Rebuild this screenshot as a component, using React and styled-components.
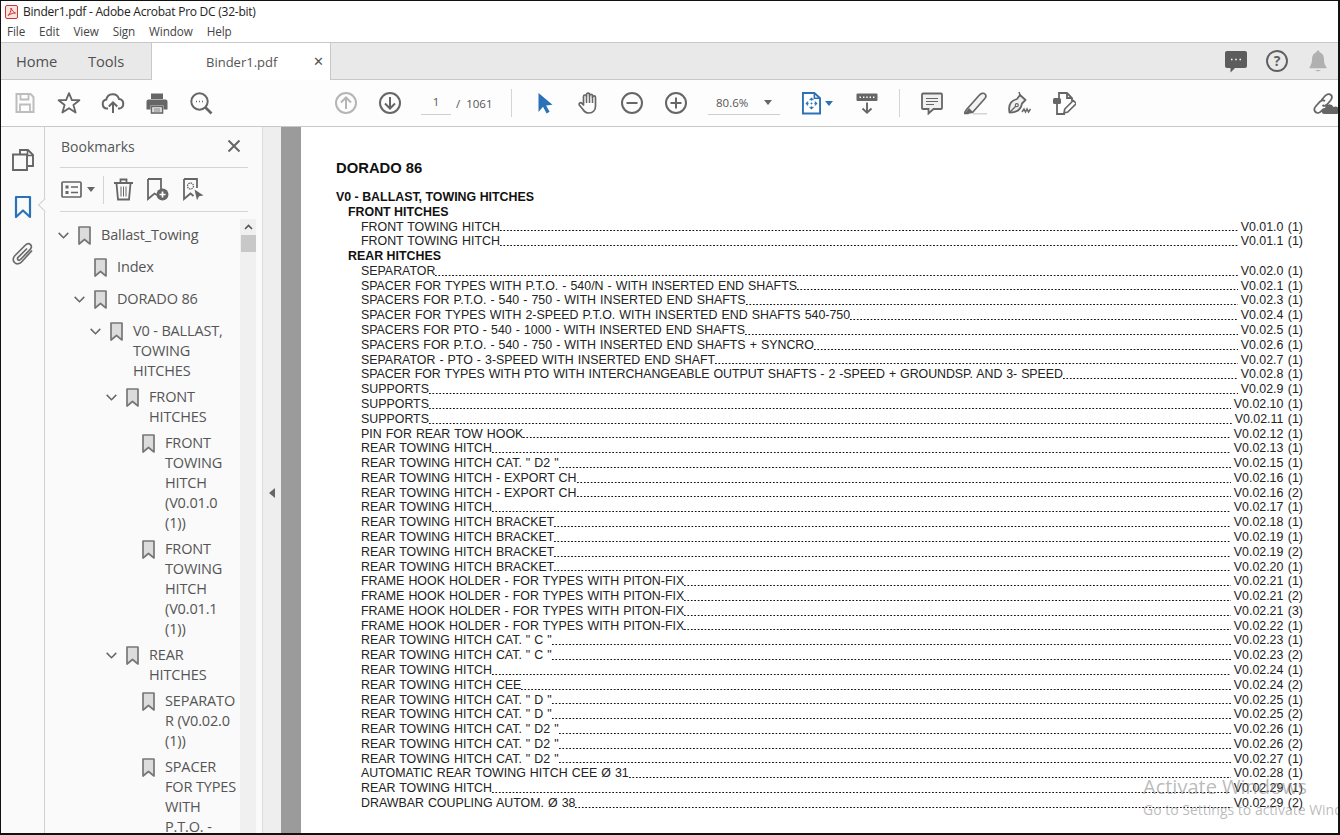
import React from "react";
import styled, { createGlobalStyle } from "styled-components";

const Global = createGlobalStyle`
  html, body { margin: 0; padding: 0; background: #fff; overflow: hidden; }
  * { box-sizing: border-box; }
`;
const UI = `"Open Sans", "Noto Sans", sans-serif`;

const Frame = styled.div`
  width: 1340px; height: 835px; display: flex; flex-direction: column; position: relative; overflow: hidden;
  border: solid #111; border-width: 1px 2px 2px 1px; font-family: ${UI}; background: #fff;
`;
const TitleBar = styled.div`
  height: 19px; display: flex; align-items: center; padding: 2px 0 0 4px; gap: 5px; font-size: 12px; color: #222; letter-spacing: -0.25px;
`;
const MenuBar = styled.div`
  height: 23px; display: flex; align-items: center; padding-left: 6px; gap: 14px; font-size: 11.7px; color: #444; letter-spacing: -0.1px; border-bottom: 1px solid #c8c8c8;
`;
const TabBar = styled.div`
  height: 37px; display: flex; align-items: stretch; background: #e9e9e9; border-bottom: 1px solid #c8c8c8; color: #505050;
`;
const NavTab = styled.div`
  display: flex; align-items: center; font-size: 14.7px; margin-left: ${p => p.$ml}px; width: ${p => p.$w}px; letter-spacing: -0.05px;
`;
const DocTab = styled.div`
  width: 180px; margin-bottom: -1px; background: #fff; border: solid #c8c8c8; border-width: 0 1px; display: flex; align-items: center; font-size: 13px; padding-left: 54px; color: #555; position: relative;
`;
const TabClose = styled.span`
  position: absolute; left: 161px; top: 10px; font-size: 13px; line-height: 16px; color: #555;
`;
const TabIcons = styled.div`
  margin-left: auto; display: flex; align-items: center; gap: 14px; padding-right: 7px;
`;
const TabIcon = styled.div`
  width: 27px; height: 27px; display: flex; align-items: center; justify-content: center;
`;
const Toolbar = styled.div`
  height: 47px; flex: none; display: flex; align-items: center; padding-left: 2px; border-bottom: 1px solid #c8c8c8; background: #fdfdfd; overflow: hidden;
`;
const ToolBtn = styled.div`
  width: 44px; height: 30px; flex: none; display: flex; align-items: center; justify-content: center; gap: 2px;
`;
const FitBtn = styled(ToolBtn)` justify-content: flex-start; padding-left: 13px; gap: 4px; `;
const Gap = styled.div` flex: none; width: ${p => p.$w}px; `;
const Divider = styled.div` flex: none; width: 1px; height: 28px; background: #d4d4d4; `;
const PageField = styled.div`
  width: 30px; flex: none; height: 24px; border-bottom: 1px solid #cfcfcf; font-size: 11.5px; color: #555; text-align: center; line-height: 22px;
`;
const PageTotal = styled.div` flex: none; font-size: 11.5px; color: #555; margin-left: 5px; width: 55px; white-space: pre; `;
const ZoomField = styled.div`
  width: 72px; flex: none; height: 24px; border-bottom: 1px solid #cfcfcf; font-size: 11.5px; color: #555; line-height: 22px; display: flex; justify-content: space-between; padding: 0 8px; align-items: center;
`;
const Caret = styled.span`
  display: inline-block; flex: none; width: 0; height: 0; border: 4px solid transparent; border-top: 5px solid ${p => p.$c || "#666"}; border-bottom: 0;
`;
const Main = styled.div` flex: 1; display: flex; min-height: 0; `;
const Rail = styled.div`
  width: 44px; flex: none; background: #fafafa; border-right: 1px solid #d0d0d0; display: flex; flex-direction: column; align-items: center; padding-top: 19px; gap: 19px; position: relative;
`;
const RailIcon = styled.div` width: 28px; height: 28px; display: flex; align-items: center; justify-content: center; `;
const RailNotch = styled.div`
  position: absolute; left: 39px; top: 73px; width: 10px; height: 10px; background: #fafafa; border: solid #d0d0d0; border-width: 0 0 1px 1px; transform: rotate(45deg);
`;
const Panel = styled.div`
  width: 217px; flex: none; background: #fafafa; display: flex; flex-direction: column; min-height: 0; padding-left: 15px;
`;
const PanelHead = styled.div`
  height: 41px; width: 188px; flex: none; display: flex; align-items: center; justify-content: space-between; font-size: 14px; color: #555; padding: 0 7px 2px 1px; border-bottom: 1px solid #d4d4d4;
`;
const PanelTools = styled.div`
  height: 44px; width: 188px; flex: none; display: flex; align-items: center; border-bottom: 1px solid #d4d4d4; padding-left: 1px;
`;
const PanelList = styled.div` flex: none; width: 42px; display: flex; align-items: center; gap: 5px; `;
const PanelBtn = styled.div` flex: none; width: ${p => p.$w}px; display: flex; align-items: center; justify-content: center; `;
const TreeWrap = styled.div` flex: 1; min-height: 0; display: flex; margin-left: -15px; padding-top: 7px; overflow: hidden; `;
const Tree = styled.div` width: 195px; flex: none; `;
const Item = styled.div`
  position: relative; padding: 6px 2px ${p => (p.$multi ? 0 : 6)}px ${p => 56 + p.$level * 16}px; font-size: 14.5px; line-height: 20px; color: #555; overflow-wrap: anywhere; letter-spacing: -0.15px;
`;
const ItemMarks = styled.div`
  position: absolute; left: ${p => 13 + p.$level * 16}px; top: 6px; height: 20px; display: flex; align-items: center;
`;
const Chev = styled.div` width: 20px; flex: none; display: flex; justify-content: flex-start; `;
const Scrollbar = styled.div`
  width: 16px; flex: none; background: #f0f0f0; display: flex; flex-direction: column; align-items: center;
`;
const ScrollUp = styled.div` height: 16px; display: flex; align-items: center; `;
const ScrollThumb = styled.div` width: 15px; height: 17px; background: #c8c8c8; `;
const Collapse = styled.div`
  width: 19px; flex: none; background: #eeeeee; border-left: 1px solid #dcdcdc; display: flex; align-items: center; justify-content: center; padding-top: 26px;
`;
const CollapseArrow = styled.span`
  display: block; width: 0; height: 0; border: 5px solid transparent; border-right: 6px solid #666; border-left: 0;
`;
const Gutter = styled.div` width: 20px; flex: none; background: #9b9b9b; `;
const PageView = styled.div`
  flex: 1; min-width: 0; padding: 32px 35px 0 35px; font-family: "Liberation Sans", Arial, sans-serif; color: #1c1c1c; overflow: hidden; background: #fff;
`;
const DocTitle = styled.div` font-size: 14.8px; font-weight: 700; line-height: 18px; margin-bottom: 13px; color: #111; `;
const Head = styled.div`
  font-size: 12.4px; font-weight: 700; line-height: 14.78px; padding-left: ${p => p.$indent}px; color: #111; white-space: nowrap;
`;
const Row = styled.div`
  display: flex; font-size: 12.4px; line-height: 14.78px; padding-left: 25px; white-space: nowrap; color: #222;
`;
const RowName = styled.span` flex: none; word-spacing: 0.6px; letter-spacing: ${p => p.$ls || 0}px; `;
const Leader = styled.span`
  flex: 1; min-width: 0;
  background: linear-gradient(to right, #111 1.4px, transparent 1.4px) left bottom 3px / 3.44px 1px repeat-x;
`;
const RowCode = styled.span` flex: none; margin-left: 3px; word-spacing: 1px; `;
const Watermark = styled.div`
  position: absolute; left: 1142px; top: 773px; color: rgba(120,120,120,0.5); white-space: nowrap; pointer-events: none; font-family: ${UI};
`;
const WmTitle = styled.div` font-size: 20px; line-height: 26px; `;
const WmSub = styled.div` font-size: 14px; line-height: 20px; `;

const Svg = ({ w = 24, h = 24, vb, children }) => (
  <svg width={w} height={h} viewBox={vb || `0 0 ${w} ${h}`} fill="none">{children}</svg>
);

const PdfLogo = () => (
  <Svg w={13} h={14}>
    <rect x=".5" y=".5" width="12" height="13" rx="1.5" fill="#f8e3e0" stroke="#c8382e" />
    <path d="M3 10.5C5 9 6.5 5.5 6 3c1 2.5 2.5 4.5 4.5 5-2.5 0-5 .8-7.5 2.5Z" stroke="#c8382e" strokeWidth="1" />
  </Svg>
);
const SaveIcon = () => (
  <Svg>
    <path d="M3.5 3h14l3 3v15h-17z" stroke="#bdbdbd" strokeWidth="2" />
    <path d="M7.5 3.5v5h8v-5M7 20.5v-7h10v7" stroke="#bdbdbd" strokeWidth="1.8" />
  </Svg>
);
const StarIcon = () => (
  <Svg><path d="M12 2.2l2.9 7h7.5l-6 4.8 2.2 7.6L12 17.2l-6.6 4.4 2.2-7.6-6-4.8h7.5z" stroke="#666" strokeWidth="1.8" strokeLinejoin="round" /></Svg>
);
const UploadIcon = () => (
  <Svg>
    <path d="M7 17.5H6a4.5 4.5 0 0 1-.7-8.9A6.5 6.5 0 0 1 18 8a4.8 4.8 0 0 1 .3 9.5H17" stroke="#666" strokeWidth="2" />
    <path d="M12 22V11.5M7.8 15.5 12 11.3l4.2 4.2" stroke="#666" strokeWidth="2" />
  </Svg>
);
const PrintIcon = () => (
  <Svg>
    <path d="M6 2.5h12V8H6z" fill="#666" />
    <path d="M3.5 8.5h17a2 2 0 0 1 2 2v8h-4v-4h-13v4h-4v-8a2 2 0 0 1 2-2Z" fill="#666" />
    <rect x="6.5" y="15.5" width="11" height="6.5" fill="#fff" stroke="#666" strokeWidth="1.6" />
    <path d="M8.5 18h7M8.5 20h7" stroke="#666" />
  </Svg>
);
const SearchIcon = () => (
  <Svg>
    <circle cx="10.5" cy="10.5" r="8.2" stroke="#666" strokeWidth="2" />
    <path d="m16.5 16.5 6 6" stroke="#666" strokeWidth="2.6" />
    <path d="M7 10.5h1M10 10.5h1M13 10.5h1" stroke="#666" strokeWidth="1.6" />
  </Svg>
);
const CircleArrow = ({ up, c }) => (
  <Svg>
    <circle cx="12" cy="12" r="10" stroke={c} strokeWidth="2" />
    <path d={up ? "M12 18V6.5M7 11.5l5-5 5 5" : "M12 6v11.5M7 12.5l5 5 5-5"} stroke={c} strokeWidth="2" />
  </Svg>
);
const SelectIcon = () => (
  <Svg><path d="M6.5 2v19l4.5-5.2 3.6 6.6 3-1.6-3.5-6.4 6.4-.6z" fill="#2a72b8" /></Svg>
);
const HandIcon = () => (
  <Svg>
    <path d="M7.5 14V5.5a1.5 1.5 0 0 1 3 0V3.6a1.5 1.5 0 0 1 3 0v1.2a1.5 1.5 0 0 1 3 0v1.5a1.5 1.5 0 0 1 3 0V15c0 4-2.5 7-6.5 7-3 0-4.5-1-6-3.5L3.3 14c-1-1.7 1.4-3.2 2.6-1.6z" stroke="#666" strokeWidth="1.7" strokeLinejoin="round" />
    <path d="M10.5 5.5V12M13.5 4.5V12M16.5 5.5V12" stroke="#666" strokeWidth="1.5" />
  </Svg>
);
const CircleSign = ({ plus }) => (
  <Svg>
    <circle cx="12" cy="12" r="10" stroke="#666" strokeWidth="2" />
    <path d={plus ? "M6.5 12h11M12 6.5v11" : "M6.5 12h11"} stroke="#666" strokeWidth="2" />
  </Svg>
);
const FitIcon = () => (
  <Svg w={20} h={24}>
    <path d="M1 1.5h12l6 5.5v16H1z" fill="#fff" stroke="#2a72b8" strokeWidth="2" />
    <path d="M13 1.5V7h6" stroke="#2a72b8" strokeWidth="1.6" />
    <path d="M10 7.5v10M5 12.5h10" stroke="#2a72b8" strokeDasharray="2 2" />
    <path d="m8 9 2-2 2 2M8 16l2 2 2-2M6.5 10.5l-2 2 2 2M13.5 10.5l2 2-2 2" stroke="#2a72b8" strokeWidth="1.2" />
  </Svg>
);
const KbdIcon = () => (
  <Svg>
    <rect x="1.5" y="2.5" width="21" height="7.5" rx="1" fill="#666" />
    <path d="M4.5 6.2h1.4M8 6.2h1.4M11.3 6.2h1.4M14.6 6.2H16M18 6.2h1.4" stroke="#fff" strokeWidth="1.6" />
    <path d="M12 11.5v10M7.5 17.5l4.5 4.2 4.5-4.2" stroke="#666" strokeWidth="1.9" />
  </Svg>
);
const CommentIcon = () => (
  <Svg>
    <path d="M3 2.5h18a1 1 0 0 1 1 1V17a1 1 0 0 1-1 1h-7.5L8.5 22.5V18H3a1 1 0 0 1-1-1V3.5a1 1 0 0 1 1-1Z" fill="#f0f0f0" stroke="#666" strokeWidth="1.8" />
    <path d="M6 7.5h12M6 10.5h12M6 13.5h8" stroke="#666" strokeWidth="1.2" />
  </Svg>
);
const MarkerIcon = () => (
  <Svg>
    <path d="M0 22.5 3 18l12-13.5c2-2 4.5-3 6-1.5s1 3.5-1 5.5L8.5 21.5 5 21l-1 1.5z" fill="#f2f2f2" stroke="#666" strokeWidth="1.7" strokeLinejoin="round" />
    <path d="M1 22.5 5 17l4 4-2 1.5z" fill="#666" />
    <path d="M9 22h14v1.5H9z" fill="#d5d5d5" />
  </Svg>
);
const SignIcon = () => (
  <Svg>
    <path d="M1.5 21.5C0 14 3 9.5 9 8l3-4 5.5 5-3.5 3.5C13 18.5 9 21.5 1.5 21.5Z" fill="#f0f0f0" stroke="#666" strokeWidth="1.8" strokeLinejoin="round" />
    <path d="M1.5 21.5 8 15" stroke="#666" strokeWidth="1.4" />
    <circle cx="8.8" cy="14.2" r="1.5" stroke="#666" strokeWidth="1.2" />
    <path d="M12.5 5.5 11 1M14 21l2-3 1.5 3 1.5-3 1.5 3 2-3" stroke="#666" strokeWidth="1.5" />
  </Svg>
);
const EditDocIcon = () => (
  <Svg>
    <path d="M7 7V2h8l5 5v3.5M15 2v5h5M5 13v10h8" stroke="#666" strokeWidth="1.8" />
    <rect x="1" y="7" width="8" height="6" rx="1.5" fill="#666" />
    <path d="m12 22 .8-4 8.5-8.5 3 3-8.5 8.5z" fill="#fff" stroke="#666" strokeWidth="1.7" strokeLinejoin="round" />
  </Svg>
);
const LinkCloudIcon = () => (
  <Svg w={28} h={24}>
    <path d="M10.5 9 14 5c2-2.2 4.5-2.5 6-1s1 3.5-.5 5.5L16 13.5c-1.5 1.5-3.5 1.5-4.5.5" stroke="#666" strokeWidth="1.8" />
    <path d="M14 10c-1.5-1-3.3-1-4.8.5L5 15c-2 2.2-2 4.5-.5 6s4 1 5.8-.8L12 18.5" stroke="#666" strokeWidth="1.8" />
    <path d="M13.5 23a3 3 0 0 1 .5-6 4.5 4.5 0 0 1 8.5-1 3.5 3.5 0 0 1 3.5 7z" fill="#666" />
  </Svg>
);
const ChatIcon = () => (
  <Svg>
    <path d="M3 2h18a2 2 0 0 1 2 2v13a2 2 0 0 1-2 2h-10l-4.5 4.5V19H3a2 2 0 0 1-2-2V4a2 2 0 0 1 2-2Z" fill="#5c5c5c" />
    <path d="M7 10.5h1.5M11.2 10.5h1.5M15.5 10.5H17" stroke="#fff" strokeWidth="1.7" />
  </Svg>
);
const HelpIcon = () => (
  <Svg>
    <circle cx="12" cy="12" r="10" stroke="#5f5f5f" strokeWidth="1.9" fill="none" />
    <text x="12" y="17" textAnchor="middle" fontSize="14" fontWeight="700" fontFamily="'Open Sans', sans-serif" fill="#5f5f5f">?</text>
  </Svg>
);
const BellIcon = () => (
  <Svg>
    <path d="M12 1.5c1 0 1.5.7 1.5 1.7 3 .8 4.5 3.5 4.5 7 0 4 1 6 2.5 8v1h-17v-1C5 16 6 14 6 10.2c0-3.5 1.5-6.2 4.5-7C10.5 2.2 11 1.5 12 1.5Z" fill="#b0b0b0" />
    <path d="M9 21h6l-3 1.5z" fill="#b0b0b0" />
  </Svg>
);
const PagesIcon = () => (
  <Svg>
    <path d="M9 6V2h8l5 5v11h-5" stroke="#666" strokeWidth="1.9" />
    <path d="M16.5 2v5.5H22" stroke="#666" strokeWidth="1.6" />
    <path d="M2 6.5h14V22H2z" fill="#fafafa" stroke="#666" strokeWidth="1.9" />
  </Svg>
);
const BlueBookmark = () => (
  <Svg><path d="M5 2h14v20l-7-6.5L5 22z" stroke="#2a72b8" strokeWidth="2.2" strokeLinejoin="round" /></Svg>
);
const ClipIcon = () => (
  <Svg>
    <path d="M21 8.5 10.5 20c-2 2-5 2.5-7 .5s-1.5-5 .5-7L14.5 3c1.5-1.5 3.5-1.7 5-.3s1 3.5-.5 5L9.5 17.5c-.8.8-1.8 1-2.5.3s-.5-1.8.3-2.6L16 6.5" stroke="#6a6a6a" strokeWidth="1.7" />
  </Svg>
);
const ListIcon = () => (
  <Svg w={21} h={17}>
    <rect x="1" y="1" width="19" height="15" rx="1" stroke="#666" strokeWidth="1.7" />
    <path d="M4.5 4.5h3v3h-3zM4.5 10h3v3h-3z" fill="#666" />
    <path d="M10 6h7M10 11.5h7" stroke="#666" strokeWidth="1.7" />
  </Svg>
);
const TrashIcon = () => (
  <Svg w={21} h={23}>
    <path d="M1 5h19M7.5 4.5v-3h6v3" stroke="#666" strokeWidth="1.8" />
    <path d="M3.5 5.5 5 21.5h11l1.5-16" stroke="#666" strokeWidth="1.8" />
    <path d="M8 8.5v10M10.5 8.5v10M13 8.5v10" stroke="#666" />
  </Svg>
);
const BookmarkAdd = () => (
  <Svg w={23} h={23}>
    <path d="M2 1h13v10M2 1v20l6.5-5.5L11 17" stroke="#666" strokeWidth="1.8" />
    <circle cx="16.5" cy="16.5" r="6" fill="#666" />
    <path d="M13.5 16.5h6M16.5 13.5v6" stroke="#fff" strokeWidth="1.7" />
  </Svg>
);
const BookmarkStar = () => (
  <Svg w={23} h={23}>
    <path d="M2 1h13v9M2 1v20l6.5-5.5 3 2.5" stroke="#666" strokeWidth="1.8" />
    <circle cx="8.5" cy="8" r="3" stroke="#666" strokeWidth="1.3" strokeDasharray="1.5 .8" />
    <path d="m12.5 11.5 9 6-4.5.8-2 4z" fill="#666" />
  </Svg>
);
const TreeBookmark = () => (
  <Svg w={13} h={19}>
    <path d="M1 1h11v17l-5.5-4.500L1 18z" fill="#dcdcdc" stroke="#777" strokeWidth="1.7" strokeLinejoin="round" />
  </Svg>
);
const Chevron = () => (
  <Svg w={11} h={7}><path d="m.7.9 4.8 4.8L10.3.9" stroke="#666" strokeWidth="1.5" /></Svg>
);
const ChevronUp = () => (
  <Svg w={9} h={6}><path d="m1 5 3.5-3.5L8 5" stroke="#555" strokeWidth="1.6" /></Svg>
);

const tree = [
  [0, true, "Ballast_Towing"], [1, false, "Index"], [1, true, "DORADO 86"],
  [2, true, "V0 - BALLAST, TOWING HITCHES", true], [3, true, "FRONT HITCHES", true],
  [4, false, "FRONT TOWING HITCH (V0.01.0 (1))", true], [4, false, "FRONT TOWING HITCH (V0.01.1 (1))", true],
  [3, true, "REAR HITCHES", true], [4, false, "SEPARATOR\u00a0(V0.02.0 (1))", true],
  [4, false, "SPACER FOR TYPES WITH P.T.O. - 540/N", true],
];

const rh = "REAR TOWING HITCH", rb = "REAR TOWING HITCH BRACKET", fh = "FRAME HOOK HOLDER - FOR TYPES WITH PITON-FIX";
const rear = [
  ["SEPARATOR", "V0.02.0 (1)"],
  ["SPACER FOR TYPES WITH P.T.O. - 540/N - WITH INSERTED END SHAFTS", "V0.02.1 (1)"],
  ["SPACERS FOR P.T.O. - 540 - 750 - WITH INSERTED END SHAFTS", "V0.02.3 (1)"],
  ["SPACER FOR TYPES WITH 2-SPEED P.T.O. WITH INSERTED END SHAFTS 540-750", "V0.02.4 (1)"],
  ["SPACERS FOR PTO - 540 - 1000 - WITH INSERTED END SHAFTS", "V0.02.5 (1)"],
  ["SPACERS FOR P.T.O. - 540 - 750 - WITH INSERTED END SHAFTS + SYNCRO", "V0.02.6 (1)"],
  ["SEPARATOR - PTO - 3-SPEED WITH INSERTED END SHAFT", "V0.02.7 (1)"],
  ["SPACER FOR TYPES WITH PTO WITH INTERCHANGEABLE OUTPUT SHAFTS - 2 -SPEED + GROUNDSP. AND 3- SPEED", "V0.02.8 (1)", -0.06],
  ["SUPPORTS", "V0.02.9 (1)"], ["SUPPORTS", "V0.02.10 (1)"], ["SUPPORTS", "V0.02.11 (1)"],
  ["PIN FOR REAR TOW HOOK", "V0.02.12 (1)"], [rh, "V0.02.13 (1)"],
  ['REAR TOWING HITCH CAT. " D2 "', "V0.02.15 (1)"],
  ["REAR TOWING HITCH - EXPORT CH", "V0.02.16 (1)"], ["REAR TOWING HITCH - EXPORT CH", "V0.02.16 (2)"],
  [rh, "V0.02.17 (1)"], [rb, "V0.02.18 (1)"], [rb, "V0.02.19 (1)"], [rb, "V0.02.19 (2)"], [rb, "V0.02.20 (1)"],
  [fh, "V0.02.21 (1)"], [fh, "V0.02.21 (2)"], [fh, "V0.02.21 (3)"], [fh, "V0.02.22 (1)"],
  ['REAR TOWING HITCH CAT. " C "', "V0.02.23 (1)"], ['REAR TOWING HITCH CAT. " C "', "V0.02.23 (2)"],
  [rh, "V0.02.24 (1)"], ["REAR TOWING HITCH CEE", "V0.02.24 (2)"],
  ['REAR TOWING HITCH CAT. " D "', "V0.02.25 (1)"], ['REAR TOWING HITCH CAT. " D "', "V0.02.25 (2)"],
  ['REAR TOWING HITCH CAT. " D2 "', "V0.02.26 (1)"], ['REAR TOWING HITCH CAT. " D2 "', "V0.02.26 (2)"],
  ['REAR TOWING HITCH CAT. " D2 "', "V0.02.27 (1)"],
  ["AUTOMATIC REAR TOWING HITCH CEE Ø 31", "V0.02.28 (1)"], [rh, "V0.02.29 (1)"],
  ["DRAWBAR COUPLING AUTOM. Ø 38", "V0.02.29 (2)"],
];
const TocRow = ({ name, code, ls }) => (
  <Row><RowName $ls={ls}>{name}</RowName><Leader /><RowCode>{code}</RowCode></Row>
);

export default function App() {
  return (
    <Frame>
      <Global />
      <TitleBar><PdfLogo /><span>Binder1.pdf - Adobe Acrobat Pro DC (32-bit)</span></TitleBar>
      <MenuBar>{["File", "Edit", "View", "Sign", "Window", "Help"].map(m => <span key={m}>{m}</span>)}</MenuBar>
      <TabBar>
        <NavTab $ml={15} $w={72}>Home</NavTab>
        <NavTab $ml={0} $w={63}>Tools</NavTab>
        <DocTab>Binder1.pdf<TabClose>✕</TabClose></DocTab>
        <TabIcons>
          <TabIcon><ChatIcon /></TabIcon>
          <TabIcon><HelpIcon /></TabIcon>
          <TabIcon><BellIcon /></TabIcon>
        </TabIcons>
      </TabBar>
      <Toolbar>
        <ToolBtn><SaveIcon /></ToolBtn>
        <ToolBtn><StarIcon /></ToolBtn>
        <ToolBtn><UploadIcon /></ToolBtn>
        <ToolBtn><PrintIcon /></ToolBtn>
        <ToolBtn><SearchIcon /></ToolBtn>
        <Gap $w={101} />
        <ToolBtn><CircleArrow up c="#b5b5b5" /></ToolBtn>
        <ToolBtn><CircleArrow c="#666" /></ToolBtn>
        <Gap $w={9} />
        <PageField>1</PageField>
        <PageTotal>{"/  1061"}</PageTotal>
        <Divider />
        <Gap $w={10} />
        <ToolBtn><SelectIcon /></ToolBtn>
        <ToolBtn><HandIcon /></ToolBtn>
        <ToolBtn><CircleSign /></ToolBtn>
        <ToolBtn><CircleSign plus /></ToolBtn>
        <Gap $w={10} />
        <ZoomField><span>80.6%</span><Caret /></ZoomField>
        <Gap $w={9} />
        <FitBtn><FitIcon /><Caret $c="#2a72b8" /></FitBtn>
        <Gap $w={12} />
        <ToolBtn><KbdIcon /></ToolBtn>
        <Gap $w={10} />
        <Divider />
        <Gap $w={10} />
        <ToolBtn><CommentIcon /></ToolBtn>
        <ToolBtn><MarkerIcon /></ToolBtn>
        <ToolBtn><SignIcon /></ToolBtn>
        <ToolBtn><EditDocIcon /></ToolBtn>
        <Gap $w={217} />
        <ToolBtn><LinkCloudIcon /></ToolBtn>
      </Toolbar>
      <Main>
        <Rail>
          <RailIcon><PagesIcon /></RailIcon>
          <RailIcon><BlueBookmark /></RailIcon>
          <RailIcon><ClipIcon /></RailIcon>
          <RailNotch />
        </Rail>
        <Panel>
          <PanelHead>
            <span>Bookmarks</span>
            <Svg w={14} h={14}><path d="m1.5 1.5 11 11M12.5 1.5l-11 11" stroke="#666" strokeWidth="2" /></Svg>
          </PanelHead>
          <PanelTools>
            <PanelList><ListIcon /><Caret /></PanelList>
            <Divider />
            <PanelBtn $w={38}><TrashIcon /></PanelBtn>
            <PanelBtn $w={30}><BookmarkAdd /></PanelBtn>
            <PanelBtn $w={42}><BookmarkStar /></PanelBtn>
          </PanelTools>
          <TreeWrap>
            <Tree>
              {tree.map(([level, open, text, multi]) => (
                <Item key={text} $level={level} $multi={multi}>
                  <ItemMarks $level={level}>
                    <Chev>{open && <Chevron />}</Chev>
                    <TreeBookmark />
                  </ItemMarks>
                  {text}
                </Item>
              ))}
            </Tree>
            <Scrollbar>
              <ScrollUp><ChevronUp /></ScrollUp>
              <ScrollThumb />
            </Scrollbar>
          </TreeWrap>
        </Panel>
        <Collapse><CollapseArrow /></Collapse>
        <Gutter />
        <PageView>
          <DocTitle>DORADO 86</DocTitle>
          <Head $indent={0}>V0 - BALLAST, TOWING HITCHES</Head>
          <Head $indent={12}>FRONT HITCHES</Head>
          <TocRow name="FRONT TOWING HITCH" code="V0.01.0 (1)" />
          <TocRow name="FRONT TOWING HITCH" code="V0.01.1 (1)" />
          <Head $indent={12}>REAR HITCHES</Head>
          {rear.map(([n, c, ls]) => <TocRow key={c} name={n} code={c} ls={ls} />)}
        </PageView>
      </Main>
      <Watermark>
        <WmTitle>Activate Windows</WmTitle>
        <WmSub>Go to Settings to activate Windows.</WmSub>
      </Watermark>
    </Frame>
  );
}
